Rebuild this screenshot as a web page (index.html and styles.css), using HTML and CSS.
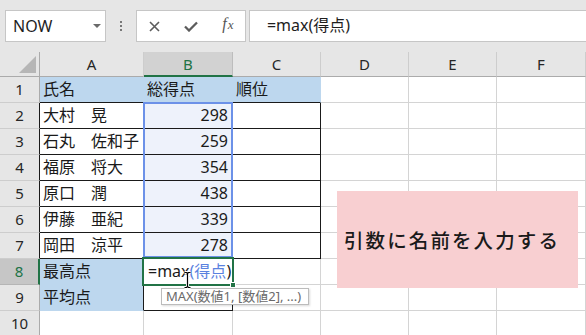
FILE: index.html
```html
<!DOCTYPE html>
<html lang="ja">
<head>
<meta charset="utf-8">
<title>Excel</title>
<link rel="stylesheet" href="styles.css">
</head>
<body>
<div class="app">
  <div class="toolbar">
    <div class="namebox"><span class="nb-text">NOW</span><span class="nb-arrow"></span></div>
    <div class="grip"><span></span><span></span><span></span></div>
    <div class="iconbox">
      <span class="ib"><svg width="11" height="11" viewBox="0 0 11 11"><path d="M1 1L10 10M10 1L1 10" stroke="#5c5c5c" stroke-width="1.6" fill="none"/></svg></span>
      <span class="ib"><svg width="14" height="11" viewBox="0 0 14 11"><path d="M1 5.5L5 9.5L13 1.5" stroke="#5c5c5c" stroke-width="2.3" fill="none"/></svg></span>
      <span class="ib fx"><span class="fx-f">f</span><span class="fx-x">x</span></span>
    </div>
    <div class="formula">=max(得点)</div>
  </div>

  <div class="sheet">
    <div class="grid">
      <!-- header -->
      <div class="corner"><span class="tri"></span></div>
      <div class="ch">A</div>
      <div class="ch sel">B</div>
      <div class="ch">C</div>
      <div class="ch">D</div>
      <div class="ch">E</div>
      <div class="ch">F</div>
      <!-- row 1 -->
      <div class="rh">1</div>
      <div class="c fill bb">氏名</div>
      <div class="c fill bb">総得点</div>
      <div class="c fill bb">順位</div>
      <div class="c"></div><div class="c"></div><div class="c"></div>
      <!-- row 2 -->
      <div class="rh blk">2</div>
      <div class="c bb br">大村　晃</div>
      <div class="c bb br num hl">298</div>
      <div class="c bb br"></div>
      <div class="c"></div><div class="c"></div><div class="c"></div>
      <!-- row 3 -->
      <div class="rh blk">3</div>
      <div class="c bb br">石丸　佐和子</div>
      <div class="c bb br num hl">259</div>
      <div class="c bb br"></div>
      <div class="c"></div><div class="c"></div><div class="c"></div>
      <!-- row 4 -->
      <div class="rh blk">4</div>
      <div class="c bb br">福原　将大</div>
      <div class="c bb br num hl">354</div>
      <div class="c bb br"></div>
      <div class="c"></div><div class="c"></div><div class="c"></div>
      <!-- row 5 -->
      <div class="rh blk">5</div>
      <div class="c bb br">原口　潤</div>
      <div class="c bb br num hl">438</div>
      <div class="c bb br"></div>
      <div class="c"></div><div class="c"></div><div class="c"></div>
      <!-- row 6 -->
      <div class="rh blk">6</div>
      <div class="c bb br">伊藤　亜紀</div>
      <div class="c bb br num hl">339</div>
      <div class="c bb br"></div>
      <div class="c"></div><div class="c"></div><div class="c"></div>
      <!-- row 7 -->
      <div class="rh blk">7</div>
      <div class="c bb br">岡田　涼平</div>
      <div class="c bb br num hl">278</div>
      <div class="c bb br"></div>
      <div class="c"></div><div class="c"></div><div class="c"></div>
      <!-- row 8 -->
      <div class="rh rsel">8</div>
      <div class="c fill">最高点</div>
      <div class="c bb br edit">=max<span class="ref">(得点</span>)</div>
      <div class="c"></div>
      <div class="c"></div><div class="c"></div><div class="c"></div>
      <!-- row 9 -->
      <div class="rh">9</div>
      <div class="c fill brk">平均点</div>
      <div class="c bb br"></div>
      <div class="c"></div>
      <div class="c"></div><div class="c"></div><div class="c"></div>
      <!-- row 10 -->
      <div class="rh">10</div>
      <div class="c"></div><div class="c"></div><div class="c"></div>
      <div class="c"></div><div class="c"></div><div class="c"></div>
    </div>

    <div class="range-hl"></div>
    <div class="active"><span class="handle"></span></div>
    <div class="tip">MAX(数値1, [数値2], ...)</div>
    <svg class="ibeam" width="9" height="18" viewBox="0 0 9 18"><path d="M1.5 1.5H3.5L4.5 2.5L5.5 1.5H7.5M4.5 2.5V15.5M1.5 16.5H3.5L4.5 15.5L5.5 16.5H7.5" stroke="#fff" stroke-width="3" fill="none"/><path d="M1.5 1.5H3.5L4.5 2.5L5.5 1.5H7.5M4.5 2.5V15.5M1.5 16.5H3.5L4.5 15.5L5.5 16.5H7.5" stroke="#000" stroke-width="1.2" fill="none"/></svg>
    <div class="note">引数に名前を入力する</div>
  </div>
</div>
</body>
</html>
```

FILE: styles.css
```css
* { box-sizing: border-box; }
html, body { margin: 0; padding: 0; }
body {
  width: 586px;
  height: 335px;
  overflow: hidden;
  background: #fff;
  font-family: "Noto Sans", "Noto Sans CJK JP", sans-serif;
  color: #1e1e1e;
}
.app { display: flex; flex-direction: column; }

/* ---------- toolbar ---------- */
.toolbar {
  height: 52px;
  background: #e6e6e6;
  display: flex;
  align-items: flex-start;
  padding: 10px 0 0 5px;
  overflow: hidden;
}
.namebox {
  width: 102px;
  height: 32px;
  background: #fff;
  border: 1px solid #c6c6c6;
  display: flex;
  align-items: center;
  padding-left: 7px;
  position: relative;
}
.nb-text { font-size: 16px; line-height: 20px; color: #1e1e1e; }
.nb-arrow {
  position: absolute;
  left: 87px;
  top: 13px;
  border-left: 4px solid transparent;
  border-right: 4px solid transparent;
  border-top: 4px solid #6a6a6a;
}
.grip {
  width: 30px;
  height: 32px;
  display: flex;
  flex-direction: column;
  align-items: center;
  justify-content: center;
  gap: 2px;
}
.grip span { width: 2px; height: 2px; background: #777; }
.iconbox {
  width: 110px;
  height: 32px;
  background: #fff;
  border: 1px solid #c6c6c6;
  display: flex;
  align-items: center;
}
.ib {
  width: 36px;
  height: 30px;
  display: flex;
  align-items: center;
  justify-content: center;
}
.fx {
  font-family: "Liberation Serif", serif;
  font-style: italic;
  color: #555;
  align-items: baseline;
  padding-top: 4px;
  padding-left: 2px;
}
.fx-f { font-size: 16px; }
.fx-x { font-size: 13px; margin-left: 1px; }
.formula {
  margin-left: 3px;
  width: 340px;
  height: 32px;
  background: #fff;
  border: 1px solid #c6c6c6;
  border-right: none;
  padding-left: 17px;
  font-size: 16px;
  line-height: 29px;
  color: #1e1e1e;
}

/* ---------- sheet ---------- */
.sheet { position: relative; height: 283px; overflow: hidden; }
.grid {
  display: grid;
  grid-template-columns: 40px 104px 89px 88px 88px 88px 89px;
  grid-template-rows: 25px repeat(10, 26px);
}
.corner {
  background: #e6e6e6;
  border-right: 1px solid #ababab;
  border-bottom: 1px solid #ababab;
  position: relative;
}
.tri {
  position: absolute;
  right: 3px;
  bottom: 3px;
  width: 0; height: 0;
  border-left: 17px solid transparent;
  border-bottom: 17px solid #b6b6b6;
}
.ch {
  background: #e6e6e6;
  border-right: 1px solid #cdcdcd;
  border-bottom: 1px solid #ababab;
  text-align: center;
  font-size: 15px;
  line-height: 25px;
  color: #262626;
}
.ch.sel {
  background: #d2d2d2;
  color: #217346;
  border-bottom: 2px solid #217346;
  border-right-color: #bdbdbd;
}
.rh {
  background: #e6e6e6;
  border-right: 1px solid #ababab;
  border-bottom: 1px solid #cdcdcd;
  text-align: center;
  font-size: 15px;
  line-height: 25px;
  color: #262626;
}
.rh.blk { border-right-color: #1a1a1a; }
.rh.rsel {
  background: #c6c6c6;
  color: #217346;
  border-right: 2px solid #217346;
  border-bottom-color: #b5b5b5;
}
.c {
  border-right: 1px solid #d4d4d4;
  border-bottom: 1px solid #d4d4d4;
  font-size: 16px;
  line-height: 25px;
  padding: 0 4px 0 3px;
  white-space: nowrap;
  color: #1a1a1a;
}
.c.fill { background: #bdd7ee; border-color: #bdd7ee; }
.c.fill.bb { border-bottom-color: #1a1a1a; }
.c.bb { border-bottom-color: #1a1a1a; }
.c.br { border-right-color: #1a1a1a; }
.c.brk { border-right-color: #1a1a1a; }
.c.num { text-align: right; }
.c.hl { background: #eef2fb; }
.c.edit { overflow: visible; position: relative; z-index: 2; padding-left: 4px; }
.ref { color: #5a82e0; }

/* overlays */
.range-hl {
  position: absolute;
  left: 143px;
  top: 50px;
  width: 90px;
  height: 156px;
  border: 2px solid #6c91e8;
}
.active {
  position: absolute;
  left: 142px;
  top: 205px;
  width: 92px;
  height: 29px;
  border: 2px solid #217346;
  z-index: 3;
}
.handle {
  position: absolute;
  right: -4px;
  bottom: -4px;
  width: 6px;
  height: 6px;
  background: #217346;
  border: 1px solid #fff;
}
.tip {
  position: absolute;
  left: 161px;
  top: 236px;
  width: 148px;
  height: 17px;
  background: #fff;
  border: 1px solid #bcbcbc;
  box-shadow: 1px 1px 2px rgba(0,0,0,0.15);
  font-size: 13px;
  line-height: 15px;
  color: #6a6a6a;
  padding-left: 4px;
  white-space: nowrap;
  z-index: 4;
}
.ibeam {
  position: absolute;
  left: 183px;
  top: 219px;
  z-index: 5;
}
.note {
  position: absolute;
  left: 337px;
  top: 139px;
  width: 241px;
  height: 97px;
  background: #f8cfd1;
  display: flex;
  align-items: center;
  padding-left: 7px;
  font-family: "Noto Sans CJK JP", sans-serif;
  font-size: 19.5px;
  font-weight: 500;
  letter-spacing: 2.1px;
  color: #1a1a1a;
}
```
